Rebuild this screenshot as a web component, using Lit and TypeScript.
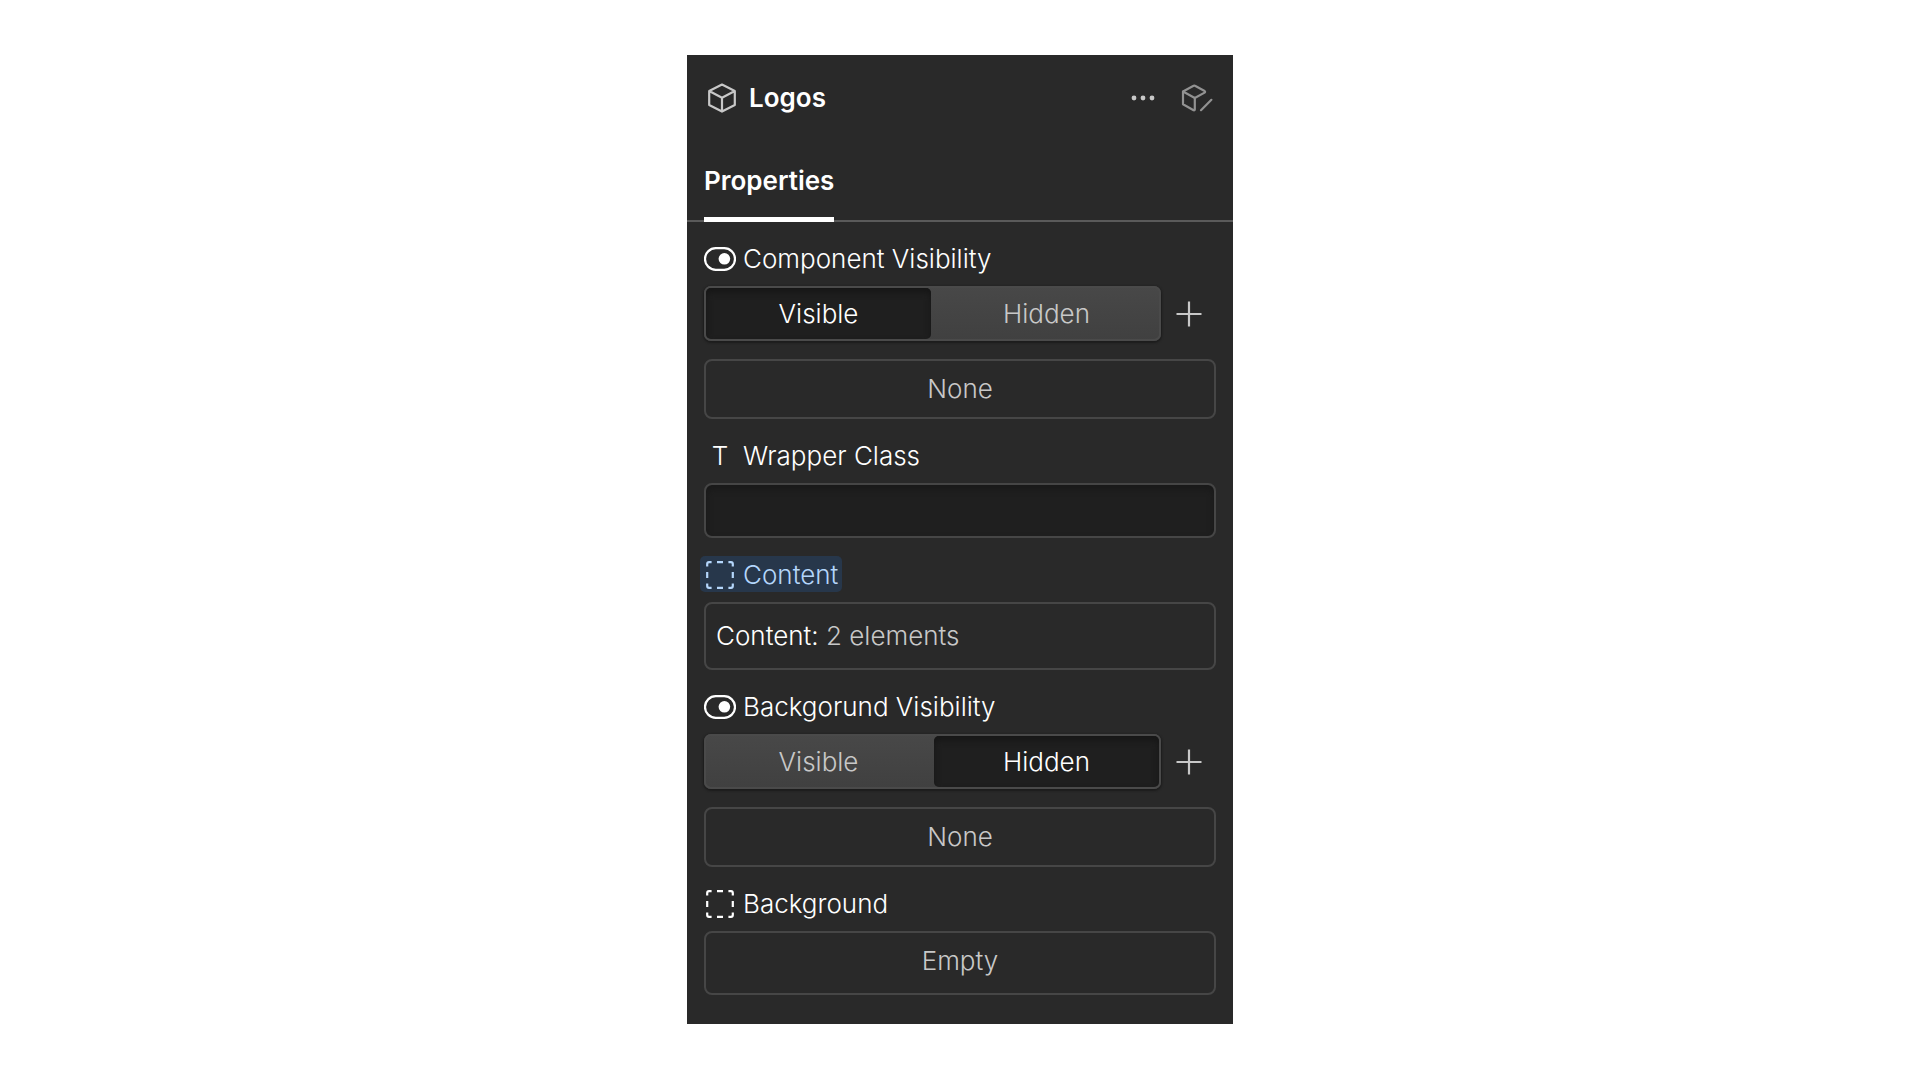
import { LitElement, html, css, svg } from "lit";
import { customElement, property, state } from "lit/decorators.js";

const toggleIcon = html`<svg class="icon" width="32" height="24" viewBox="0 0 32 24" aria-hidden="true">
  <rect x="1" y="1.2" width="30" height="21.6" rx="10.8" fill="none" stroke="currentColor" stroke-width="2.2" />
  <circle cx="20.4" cy="11.8" r="5.8" fill="currentColor" />
</svg>`;

const slotIcon = html`<svg class="icon" width="32" height="28" viewBox="0 0 32 28" aria-hidden="true">
  <path
    d="M3.2 5.6V3Q3.2 1.2 5 1.2H7.6M13 1.2H19M24.4 1.2H27Q28.8 1.2 28.8 3V5.6M28.8 11V17M28.8 22.4V25Q28.8 26.8 27 26.8H24.4M19 26.8H13M7.6 26.8H5Q3.2 26.8 3.2 25V22.4M3.2 17V11"
    fill="none" stroke="currentColor" stroke-width="2.2" />
</svg>`;

const textIcon = html`<span class="icon letter" aria-hidden="true">T</span>`;

const cubeIcon = html`<svg width="28" height="30" viewBox="0 0 28 30" aria-hidden="true">
  <path d="M14 1.5L26.8 8V22L14 28.6L1.2 22V8ZM1.2 8L14 14.8L26.8 8M14 14.8V28.6"
    fill="none" stroke="currentColor" stroke-width="2.2" stroke-linejoin="round" />
</svg>`;

const cubeEditIcon = html`<svg width="32" height="28" viewBox="0 0 32 28" aria-hidden="true">
  <path d="M2 7.5L12.6 1.8Q13.3 1.4 14 1.8L23.6 7Q24.6 7.8 23.6 8.6L13.8 14L2 7.5V20.2L12.6 26.2Q13.8 26.6 13.8 25.4V14M20 26.2L30.4 15.8"
    fill="none" stroke="currentColor" stroke-width="2.2" stroke-linejoin="round" stroke-linecap="round" />
</svg>`;

const dotsIcon = html`<svg width="24" height="6" viewBox="0 0 24 6" aria-hidden="true">
  ${[3, 12, 21].map((x) => svg`<circle cx=${x} cy="3" r="2.4" fill="currentColor" />`)}
</svg>`;

const plusIcon = html`<svg width="26" height="26" viewBox="0 0 26 26" aria-hidden="true">
  <path d="M13 0.5V25.5M0.5 13H25.5" fill="none" stroke="currentColor" stroke-width="2.2" />
</svg>`;

const base = css`
  * {
    box-sizing: border-box;
  }
  button,
  input {
    margin: 0;
    padding: 0;
    border: 0;
    background: none;
    color: inherit;
    font: inherit;
    cursor: pointer;
  }
  svg {
    display: block;
  }
`;

@customElement("visibility-field")
class VisibilityField extends LitElement {
  @property() label = "";
  @property() value = "Visible";

  static styles = [
    base,
    css`
      :host {
        display: block;
      }
      .row {
        display: grid;
        grid-template-columns: 1fr 55px;
      }
      .segments {
        display: grid;
        grid-template-columns: 1fr 1fr;
        gap: 3px;
        height: 55px;
        padding: 2px;
        border-radius: 7px;
        background: linear-gradient(#484848, #404040);
        box-shadow: inset 0 0 0 2px #4a4a4a, 0 1px 2px 1px #1c1c1c;
      }
      .segment {
        border-radius: 5px;
        color: #c8c8c8;
      }
      .segment.selected {
        background: #1f1f1f;
        box-shadow: inset 0 4px 6px #161616;
        color: #fff;
      }
      .add {
        display: grid;
        place-items: center;
        color: #c8c8c8;
      }
      .none {
        display: grid;
        place-items: center;
        width: 100%;
        height: 60px;
        margin-top: 18px;
        border: 2px solid #464646;
        border-radius: 8px;
        color: #c8c8c8;
      }
    `,
  ];

  render() {
    return html`
      <div class="row">
        <div class="segments" role="group" aria-label=${this.label}>
          ${["Visible", "Hidden"].map(
            (option) => html`<button
              class="segment ${option === this.value ? "selected" : ""}"
              aria-pressed=${option === this.value ? "true" : "false"}
              @click=${() => (this.value = option)}
            >${option}</button>`
          )}
        </div>
        <button class="add" aria-label="Add condition">${plusIcon}</button>
      </div>
      <button class="none">None</button>
    `;
  }
}

@customElement("app-root")
class AppRoot extends LitElement {
  @state() wrapperClass = "";

  static styles = [
    base,
    css`
      :host {
        display: flex;
        justify-content: center;
        align-items: flex-start;
        min-height: 100vh;
        box-sizing: border-box;
        padding: 55px 16px;
        background: #fff;
        font: 300 26px/36px Inter, "Liberation Sans", sans-serif;
      }
      .panel {
        width: 100%;
        max-width: 546px;
        background: #292929;
        color: #fff;
      }
      .header {
        display: flex;
        align-items: center;
        height: 86px;
        padding: 0 20px 0 21px;
        color: #c8c8c8;
      }
      .title {
        flex: 1;
        margin: 0 0 0 13px;
        font-size: 26px;
        font-weight: 600;
        color: #fff;
      }
      .more {
        padding: 12px 0;
      }
      .edit {
        margin-left: 26px;
        color: #929292;
      }
      .tabs {
        display: flex;
        padding: 0 17px;
        box-shadow: inset 0 -2px #5a5a5a;
      }
      .tab {
        height: 81px;
        border-bottom: 5px solid #fff;
        padding-top: 4px;
        font-weight: 600;
      }
      .body {
        display: grid;
        gap: 18px;
        padding: 18px 17px 29px;
      }
      .group {
        display: grid;
        gap: 10px;
        justify-items: stretch;
      }
      .label {
        display: flex;
        align-items: center;
        justify-self: start;
        gap: 7px;
        height: 36px;
        padding-top: 1px;
      }
      .icon {
        flex: none;
        width: 32px;
      }
      .letter {
        text-align: center;
      }
      .linked {
        margin-left: -4px;
        padding: 1px 4px 0 4px;
        border-radius: 5px;
        background: #27374b;
        color: #b4d6fb;
      }
      .box {
        border: 2px solid #464646;
        border-radius: 8px;
        color: #c8c8c8;
      }
      .text-input {
        width: 100%;
        height: 55px;
        padding: 0 10px;
        background: #1f1f1f;
        box-shadow: inset 0 4px 6px #191919;
        color: #fff;
        cursor: text;
      }
      .content {
        height: 68px;
        padding: 0 10px;
        text-align: left;
      }
      .content-name {
        color: #fff;
      }
      .empty {
        height: 64px;
        padding-bottom: 4px;
      }
    `,
  ];

  render() {
    return html`
      <main class="panel">
        <header class="header">
          ${cubeIcon}
          <h1 class="title">Logos</h1>
          <button class="more" aria-label="More options">${dotsIcon}</button>
          <button class="edit" aria-label="Edit component">${cubeEditIcon}</button>
        </header>
        <div class="tabs" role="tablist">
          <button class="tab" role="tab" aria-selected="true">Properties</button>
        </div>
        <div class="body">
          <section class="group">
            <div class="label">${toggleIcon}<span>Component Visibility</span></div>
            <visibility-field label="Component Visibility" value="Visible"></visibility-field>
          </section>
          <section class="group">
            <label class="label" for="wrapper">${textIcon}<span>Wrapper Class</span></label>
            <input
              id="wrapper"
              class="box text-input"
              type="text"
              .value=${this.wrapperClass}
              @input=${(e: Event) => (this.wrapperClass = (e.target as HTMLInputElement).value)}
            />
          </section>
          <section class="group">
            <div class="label linked">${slotIcon}<span>Content</span></div>
            <button class="box content"><span class="content-name">Content:</span> 2 elements</button>
          </section>
          <section class="group">
            <div class="label">${toggleIcon}<span>Backgorund Visibility</span></div>
            <visibility-field label="Backgorund Visibility" value="Hidden"></visibility-field>
          </section>
          <section class="group">
            <div class="label">${slotIcon}<span>Background</span></div>
            <button class="box empty">Empty</button>
          </section>
        </div>
      </main>
    `;
  }
}
